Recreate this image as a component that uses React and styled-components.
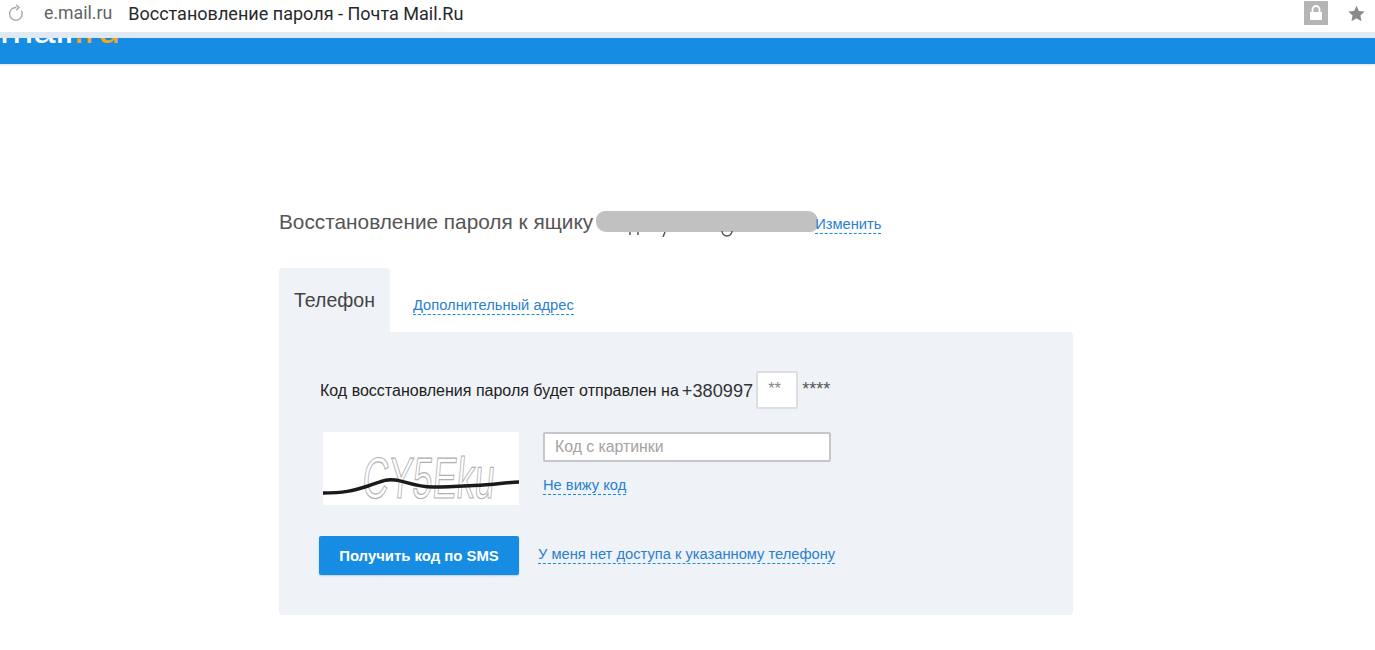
import React from 'react';
import styled, { createGlobalStyle } from 'styled-components';

const Global = createGlobalStyle`
  html, body { margin: 0; padding: 0; background: #fff; }
  body { font-family: "Liberation Sans", Arial, sans-serif; color: #333; overflow: hidden; }
  * { box-sizing: border-box; }
`;

const Page = styled.div`
  width: 1375px;
  height: 650px;
  overflow: hidden;
`;

const BrowserBar = styled.div`
  height: 32px;
  display: flex;
  align-items: center;
  padding: 0 10px 6px 8px;
  background: #fff;
`;

const Reload = styled.svg`
  width: 16px;
  height: 18px;
  margin-right: 20px;
`;

const Domain = styled.span`
  font: 17.7px "Roboto", "Liberation Sans", sans-serif;
  color: #5f6368;
  margin-right: 16px;
`;

const PageTitle = styled.span`
  font: 18.05px "Roboto", "Liberation Sans", sans-serif;
  color: #26282c;
  flex: 1;
`;

const LockBox = styled.div`
  width: 24px;
  height: 24px;
  background: #b5b5b5;
  display: flex;
  align-items: center;
  justify-content: center;
  margin-right: 20px;
`;

const StarIcon = styled.svg`
  width: 17px;
  height: 17px;
`;

const Strip = styled.div`
  height: 6px;
  background: #dfeaf5;
`;

const Header = styled.header`
  height: 26px;
  background: #168de2;
  overflow: hidden;
  box-shadow: 0 1px 2px rgba(0, 0, 0, 0.12);
`;

const Logo = styled.div`
  font: 400 40px/36px "Liberation Sans", sans-serif;
  color: #fff;
  margin-top: -27px;
  span { color: #f5a623; }
`;

const Main = styled.main`
  width: 794px;
  margin: 147px 0 0 279px;
`;

const TitleRow = styled.div`
  display: flex;
  align-items: flex-start;
  height: 57px;
`;

const Title = styled.h1`
  margin: -1px 0 0;
  font: 400 20.8px/24px "Liberation Sans", sans-serif;
  color: #555;
  white-space: nowrap;
`;

const Redacted = styled.span`
  position: relative;
  width: 222px;
  height: 21px;
  margin: 0 -3px 0 3px;
  background: #c1c1c1;
  border-radius: 9px 10px 8px 10px;
  flex: none;
`;

const RedactedPeek = styled.svg`
  position: absolute;
  left: 22px;
  top: 13px;
  width: 150px;
  height: 13px;
`;

const DashedLink = styled.a`
  display: inline-block;
  font: 14.7px/17px "Liberation Sans", sans-serif;
  color: #2a7fce;
  border-bottom: 1px dashed #168de2;
  white-space: nowrap;
  cursor: pointer;
`;

const ChangeLink = styled(DashedLink)`
  margin-top: 5px;
  position: relative;
`;

const Tabs = styled.div`
  display: flex;
  align-items: flex-end;
  height: 64px;
`;

const ActiveTab = styled.div`
  width: 111px;
  height: 64px;
  padding: 20px 0 0 15px;
  background: #eff3f8;
  border-radius: 4px 4px 0 0;
  font: 19.5px/24px "Liberation Sans", sans-serif;
  color: #444;
`;

const TabLink = styled(DashedLink)`
  margin: 0 0 17px 23px;
`;

const Panel = styled.section`
  height: 283px;
  padding: 39px 40px 0;
  background: #eff3f8;
  border-radius: 0 4px 4px 4px;
`;

const PhoneRow = styled.div`
  display: flex;
  align-items: center;
  height: 38px;
  margin-bottom: 23px;
`;

const PhoneLabel = styled.span`
  font: 16px/18px "Liberation Sans", sans-serif;
  color: #222;
  margin: 2px 0 0 1px;
  white-space: nowrap;
`;

const PhoneNumber = styled.span`
  font: 18.2px/22px "Liberation Sans", sans-serif;
  color: #333;
  margin: 2px 0 0 3px;
`;

const DigitsBox = styled.div`
  width: 42px;
  height: 38px;
  margin-left: 3px;
  padding: 5px 0 0 10px;
  background: #fff;
  border: 2px solid #dcdee2;
  border-radius: 2px;
  font: 16.5px/20px "Liberation Sans", sans-serif;
  color: #888;
`;

const Mask = styled.span`
  margin: -2px 0 0 4px;
  font: 18px/18px "Liberation Sans", sans-serif;
  color: #555;
`;

const CaptchaRow = styled.div`
  display: flex;
  margin-left: 4px;
  margin-bottom: 31px;
`;

const Captcha = styled.svg`
  width: 196px;
  height: 73px;
  background: #fff;
  margin-right: 24px;
  flex: none;
`;

const CaptchaSide = styled.div`
  display: flex;
  flex-direction: column;
  align-items: flex-start;
  gap: 15px;
`;

const CodeInput = styled.input`
  width: 288px;
  height: 30px;
  padding: 0 10px;
  background: #fff;
  border: 2px solid #c4c6c9;
  border-radius: 2px;
  font: 15.8px "Liberation Sans", sans-serif;
  outline: none;
  &::placeholder { color: #a3a3a3; opacity: 1; }
`;

const ActionRow = styled.div`
  display: flex;
  align-items: center;
`;

const SubmitButton = styled.button`
  width: 200px;
  height: 39px;
  background: #168de2;
  color: #fff;
  border: 0;
  border-radius: 2px;
  box-shadow: 0 1px 2px rgba(0, 60, 120, 0.2);
  font: bold 14.9px "Liberation Sans", sans-serif;
  padding: 0;
  margin-right: 19px;
`;

const NoAccessLink = styled(DashedLink)`
  margin-top: -1px;
`;

export default function App() {
  return (
    <Page>
      <Global />
      <BrowserBar>
        <Reload viewBox="0 0 15 17" fill="none" stroke="#a9a9a9" strokeWidth="1.3">
          <path d="M12.6 6.2A6 6 0 1 1 8 3.3" />
          <path d="M7.6 0.8 10.4 3.4 7.6 6" />
        </Reload>
        <Domain>e.mail.ru</Domain>
        <PageTitle>Восстановление пароля - Почта Mail.Ru</PageTitle>
        <LockBox>
          <svg width="14" height="16" viewBox="0 0 14 16">
            <path d="M3.5 7V4.500a3.500 3.500 0 0 1 7 0V7" fill="none" stroke="#fff" strokeWidth="1.800" />
            <rect x="1" y="7" width="12" height="8" fill="#fff" />
          </svg>
        </LockBox>
        <StarIcon viewBox="0 0 24 24">
          <path fill="#8a8a8a" d="M12 1l3.400 7.400 8.100.9-6 5.500 1.600 8L12 18.800l-7.100 4 1.600-8-6-5.500 8.100-.9z" />
        </StarIcon>
      </BrowserBar>
      <Strip />
      <Header>
        <Logo>mail<span>.ru</span></Logo>
      </Header>
      <Main>
        <TitleRow>
          <Title>Восстановление пароля к ящику</Title>
          <Redacted>
            <RedactedPeek viewBox="0 0 150 13">
              <path d="M12 8v3M20 8v3M47 8l-2 5M104 7a5 5 0 1 0 10 0" fill="none" stroke="#555" strokeWidth="1.500" />
            </RedactedPeek>
          </Redacted>
          <ChangeLink>Изменить</ChangeLink>
        </TitleRow>
        <Tabs>
          <ActiveTab>Телефон</ActiveTab>
          <TabLink>Дополнительный адрес</TabLink>
        </Tabs>
        <Panel>
          <PhoneRow>
            <PhoneLabel>Код восстановления пароля будет отправлен на</PhoneLabel>
            <PhoneNumber>+380997</PhoneNumber>
            <DigitsBox>**</DigitsBox>
            <Mask>****</Mask>
          </PhoneRow>
          <CaptchaRow>
            <Captcha viewBox="0 0 196 73">
              <text
                x="44"
                y="66"
                transform="skewX(-5)"
                fontFamily="Liberation Sans"
                fontSize="58"
                fill="#fff"
                stroke="#b0b0b0"
                strokeWidth="1.2"
                textLength="132"
                lengthAdjust="spacingAndGlyphs"
              >
                CY5Eku
              </text>
              <path d="M0 61C20 61 30 59 45 54S62 47 72 48 92 55 110 55 140 54 160 53 185 50 196 50" fill="none" stroke="#1a1a1a" strokeWidth="3.500" />
            </Captcha>
            <CaptchaSide>
              <CodeInput placeholder="Код с картинки" />
              <DashedLink>Не вижу код</DashedLink>
            </CaptchaSide>
          </CaptchaRow>
          <ActionRow>
            <SubmitButton>Получить код по SMS</SubmitButton>
            <NoAccessLink>У меня нет доступа к указанному телефону</NoAccessLink>
          </ActionRow>
        </Panel>
      </Main>
    </Page>
  );
}
